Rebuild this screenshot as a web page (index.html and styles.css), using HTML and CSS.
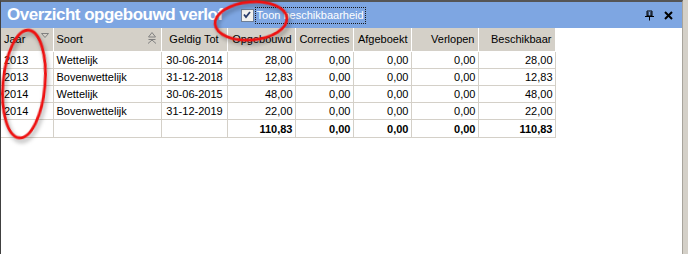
FILE: index.html
```html
<!DOCTYPE html>
<html lang="nl">
<head>
    <meta charset="UTF-8">
    <title>Overzicht opgebouwd verlof</title>
    <link rel="stylesheet" href="styles.css">
</head>
<body>

    <div class="panel">
        <div class="titlebar">
            <span class="title">Overzicht opgebouwd verlof</span>
            <label class="toggle">
                <span class="check">
                    <svg width="10" height="10" viewBox="0 0 10 10"><path d="M2 4.5 L4 7 L8 2" fill="none" stroke="#2a3d6b" stroke-width="1.8"/></svg>
                </span>
                <span class="focus">Toon beschikbaarheid</span>
            </label>
            <span class="tools">
                <svg width="11" height="11" viewBox="0 0 11 11"><path d="M3 1h5v5H3z M4 2v4 M7 2v4" fill="none" stroke="#000"/><path d="M1 6.5h9 M5.5 6.5v4" stroke="#000"/></svg>
                <svg width="9" height="9" viewBox="0 0 9 9"><path d="M1 1l7 7 M8 1l-7 7" stroke="#000" stroke-width="2"/></svg>
            </span>
        </div>

        <table class="grid">
            <colgroup>
                <col style="width:52px"><col style="width:108px"><col style="width:66px"><col style="width:68px">
                <col style="width:58px"><col style="width:58px"><col style="width:67px"><col style="width:77px">
            </colgroup>
            <thead>
                <tr>
                    <th class="left">Jaar
                        <svg class="sort-down" width="8" height="5" viewBox="0 0 8 5"><path d="M0.5 0.5h7L4 4.5z" fill="none" stroke="#808080"/></svg>
                    </th>
                    <th class="left">Soort
                        <svg class="sort-multi" width="10" height="12" viewBox="0 0 10 12"><path d="M5 0.5L8.5 5h-7z" fill="none" stroke="#808080"/><path d="M1.5 7.5h7 M1 11.5L5 8l4 3.5" fill="none" stroke="#808080"/></svg>
                    </th>
                    <th class="mid">Geldig Tot</th>
                    <th>Opgebouwd</th>
                    <th>Correcties</th>
                    <th>Afgeboekt</th>
                    <th>Verlopen</th>
                    <th>Beschikbaar</th>
                </tr>
            </thead>
            <tbody>
                <tr><td class="left">2013</td><td class="left">Wettelijk</td><td class="mid">30-06-2014</td><td>28,00</td><td>0,00</td><td>0,00</td><td>0,00</td><td>28,00</td></tr>
                <tr><td class="left">2013</td><td class="left">Bovenwettelijk</td><td class="mid">31-12-2018</td><td>12,83</td><td>0,00</td><td>0,00</td><td>0,00</td><td>12,83</td></tr>
                <tr><td class="left">2014</td><td class="left">Wettelijk</td><td class="mid">30-06-2015</td><td>48,00</td><td>0,00</td><td>0,00</td><td>0,00</td><td>48,00</td></tr>
                <tr><td class="left">2014</td><td class="left">Bovenwettelijk</td><td class="mid">31-12-2019</td><td>22,00</td><td>0,00</td><td>0,00</td><td>0,00</td><td>22,00</td></tr>
                <tr class="total"><td></td><td></td><td></td><td>110,83</td><td>0,00</td><td>0,00</td><td>0,00</td><td>110,83</td></tr>
            </tbody>
        </table>

        <!-- rode markeringen -->
        <svg class="marks" width="688" height="254" viewBox="0 0 688 254">
            <ellipse cx="24" cy="84" rx="21" ry="54" transform="rotate(5 24 84)"/>
            <ellipse cx="251" cy="21" rx="36" ry="19" transform="rotate(-5 251 21)"/>
        </svg>
    </div>

</body>
</html>
```

FILE: styles.css
```css
body {
    margin: 0;
    background: #d4d0c8;
    font-family: "Liberation Sans", Arial, sans-serif;
    font-size: 11px;
}
.panel {
    position: relative;
    width: 681px;
    height: 252px;
    background: white;
    border-top: 2px solid #555555;
    border-left: 1px solid #404040;
    border-right: 1px solid #a8a49c;
}
.titlebar {
    display: flex;
    align-items: center;
    height: 26px;
    background: #7ea6e2;
    padding-left: 6px;
    padding-right: 9px;
}
.title {
    color: white;
    font-weight: bold;
    font-size: 17px;
    letter-spacing: -0.5px;
}
.toggle {
    display: flex;
    align-items: center;
    margin-left: 18px;
    color: white;
}
.check {
    display: flex;
    align-items: center;
    justify-content: center;
    width: 11px;
    height: 11px;
    background: #f2f2ee;
    border: 1px solid #6f7f96;
}
.focus {
    margin-left: 1px;
    padding: 1px 1px 2px 1px;
    border: 1px dotted #1a1a1a;
}
.tools {
    display: flex;
    align-items: center;
    gap: 9px;
    margin-left: auto;
}
.grid {
    border-collapse: collapse;
    table-layout: fixed;
    width: 554px;
}
.grid th {
    height: 21px;
    background: #d4d0c8;
    font-weight: normal;
    text-align: right;
    padding: 0 3px 2px 3px;
    border-right: 1px solid #ffffff;
    border-bottom: 1px solid #ffffff;
    white-space: nowrap;
    position: relative;
}
.grid td {
    height: 16px;
    padding: 0 2px 0 3px;
    text-align: right;
    border-right: 1px solid #d4d0c8;
    border-bottom: 1px solid #d4d0c8;
    white-space: nowrap;
}
.grid .left {
    text-align: left;
}
.grid .mid {
    text-align: center;
}
.grid .total td {
    height: 17px;
    font-weight: bold;
}
.sort-down {
    position: absolute;
    right: 4px;
    top: 5px;
}
.sort-multi {
    position: absolute;
    right: 4px;
    top: 4px;
}
.marks {
    position: absolute;
    left: -1px;
    top: -2px;
    pointer-events: none;
}
.marks ellipse {
    fill: none;
    stroke: #ee1111;
    stroke-width: 2.8;
    filter: drop-shadow(2px 3px 2px rgba(0, 0, 0, 0.35));
}
```
